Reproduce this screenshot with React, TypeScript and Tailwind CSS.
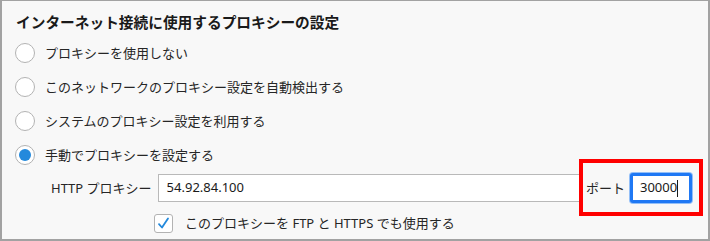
import React from 'react';

const FONT = { fontFamily: '"Noto Sans", "Noto Sans CJK JP", sans-serif' };

const Radio: React.FC<{ label: string; checked?: boolean }> = ({ label, checked }) => (
  <div className="flex items-center h-[34px] pl-[13px]">
    <span className="w-[20px] h-[20px] rounded-full border border-[#b3b3b3] bg-white flex items-center justify-center shrink-0">
      {checked && <span className="w-[12px] h-[12px] rounded-full bg-[#2389dc]" />}
    </span>
    <span className="ml-[10px] text-[13px] text-[#262626] leading-none">{label}</span>
  </div>
);

export default function App() {
  const options = [
    'プロキシーを使用しない',
    'このネットワークのプロキシー設定を自動検出する',
    'システムのプロキシー設定を利用する',
  ];

  return (
    <div
      className="relative w-[710px] h-[241px] bg-[#f8f8f8] border-t border-l-2 border-r-2 border-b-2 border-[#a2a2a2] overflow-hidden"
      style={FONT}
    >
      <div className="pl-[14px] pt-[10px] h-[32px] text-[14.7px] font-bold leading-[22px] text-[#1a1a1a]">
        インターネット接続に使用するプロキシーの設定
      </div>

      <div className="mt-[3px] flex flex-col">
        {options.map(o => (
          <Radio key={o} label={o} />
        ))}
        <Radio label="手動でプロキシーを設定する" checked />
      </div>

      <div className="flex items-center h-[32px] pl-[49px] pr-[16px]">
        <span className="text-[13px] text-[#262626] leading-none whitespace-nowrap">HTTP プロキシー</span>
        <div className="ml-[6px] flex-1 h-[28px] bg-white border border-[#b9b9b9] flex items-center pl-[8px] text-[13px] text-[#1a1a1a]">
          54.92.84.100
        </div>
        <span className="ml-[6px] text-[13px] text-[#262626] leading-none whitespace-nowrap">ポート</span>
        <div className="ml-[5px] w-[62px] h-[30px] bg-white border-[3px] border-[#1f78f4] rounded-[3px] shadow-[0_0_0_1px_#93bff8] flex items-center pl-[7px] text-[13px] text-[#1a1a1a]">
          30000<span className="w-px h-[17px] bg-[#1a1a1a]" />
        </div>
      </div>

      <div className="mt-[10px] flex items-center pl-[152px]">
        <span className="w-[19px] h-[19px] rounded-[3px] border border-[#b3b3b3] bg-white flex items-center justify-center shrink-0">
          <svg width="13" height="13" viewBox="0 0 13 13" fill="none">
            <path d="M2 7.2 L5 10.5 L11 1.5" stroke="#2389dc" strokeWidth="1.8" strokeLinecap="round" strokeLinejoin="round" />
          </svg>
        </span>
        <span className="ml-[12px] text-[13px] text-[#262626] leading-none">
          このプロキシーを FTP と HTTPS でも使用する
        </span>
      </div>

      <div className="absolute left-[577px] top-[158px] w-[124px] h-[57px] border-4 border-[#ff0000] pointer-events-none" />
    </div>
  );
}
